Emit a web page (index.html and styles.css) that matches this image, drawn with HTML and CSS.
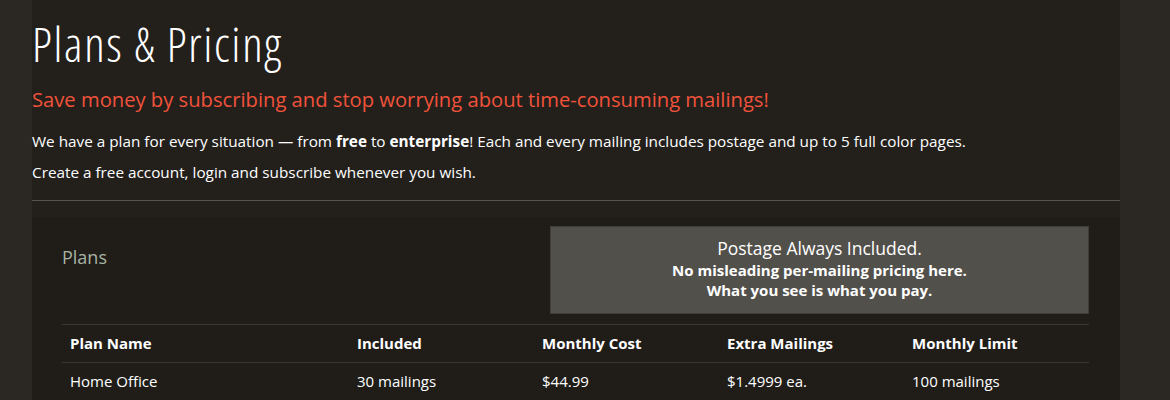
FILE: index.html
```html
<!DOCTYPE html>
<html lang="en">
<head>
<meta charset="utf-8">
<title>Plans &amp; Pricing</title>
<link rel="stylesheet" href="styles.css">
</head>
<body>
<main class="page">
  <h1 class="title">Plans &amp; Pricing</h1>
  <p class="lead">Save money by subscribing and stop worrying about time-consuming mailings!</p>
  <p class="intro">We have a plan for every situation — from <strong>free</strong> to <strong>enterprise</strong>! Each and every mailing includes postage and up to 5 full color pages.</p>
  <p class="intro">Create a free account, login and subscribe whenever you wish.</p>
  <hr class="rule">
  <section class="panel">
    <div class="panel-head">
      <h2 class="panel-title">Plans</h2>
      <div class="notice">
        <div class="notice-main">Postage Always Included.</div>
        <div class="notice-sub">No misleading per-mailing pricing here.</div>
        <div class="notice-sub">What you see is what you pay.</div>
      </div>
    </div>
    <table class="plans">
      <thead>
        <tr><th>Plan Name</th><th>Included</th><th>Monthly Cost</th><th>Extra Mailings</th><th>Monthly Limit</th></tr>
      </thead>
      <tbody>
        <tr><td>Home Office</td><td>30 mailings</td><td>$44.99</td><td>$1.4999 ea.</td><td>100 mailings</td></tr>
      </tbody>
    </table>
  </section>
</main>
</body>
</html>
```

FILE: styles.css
```css
html, body {
  margin: 0;
  padding: 0;
}
body {
  background: #2b2824;
  color: #ffffff;
  font-family: "Open Sans", "Liberation Sans", sans-serif;
  overflow: hidden;
}
.page {
  margin: 0 50px 0 32px;
  background: #23201c;
  padding-top: 13px;
  height: 387px;
}
.title {
  margin: 0;
  font-family: "Open Sans", sans-serif;
  font-weight: 300;
  font-stretch: 85%;
  font-size: 48px;
  line-height: 62px;
  letter-spacing: 1.7px;
  color: #ffffff;
}
.lead {
  margin: 11px 0 0;
  font-size: 20.2px;
  line-height: 26px;
  color: #f0523a;
}
.intro {
  margin: 0;
  font-size: 15.3px;
  line-height: 31px;
  color: #ffffff;
}
.lead + .intro {
  margin-top: 14px;
}
.intro strong {
  font-weight: 700;
}
.rule {
  margin: 12px 0 0;
  border: 0;
  border-top: 1px solid #57524a;
  height: 0;
}
.panel {
  margin-top: 16px;
  background: #201d19;
  padding: 9px 31px 0 30px;
  height: 200px;
}
.panel-head {
  display: flex;
  justify-content: space-between;
  align-items: flex-start;
  height: 98px;
}
.panel-title {
  margin: 19px 0 0;
  font-size: 18px;
  font-weight: 400;
  line-height: 24px;
  color: #a9b3a3;
}
.notice {
  width: 539px;
  height: 88px;
  box-sizing: border-box;
  background: #52504b;
  border: 1px solid #3f3d39;
  text-align: center;
  padding-top: 10px;
}
.notice-main {
  font-size: 17.5px;
  line-height: 23px;
  color: #ffffff;
}
.notice-sub {
  font-size: 15px;
  font-weight: 700;
  line-height: 20px;
  color: #ffffff;
}
.plans {
  width: 100%;
  border-collapse: collapse;
  border-top: 1px solid #3a3631;
}
.plans th, .plans td {
  text-align: left;
  padding: 0 8px 2px;
  height: 35px;
  font-size: 15px;
  color: #ffffff;
}
.plans th {
  font-weight: 700;
  border-bottom: 1px solid #3a3631;
}
.plans th:first-child {
  width: 271px;
}
.plans th:nth-child(n+2) {
  width: 169px;
}
.plans td {
  font-weight: 400;
}
```
